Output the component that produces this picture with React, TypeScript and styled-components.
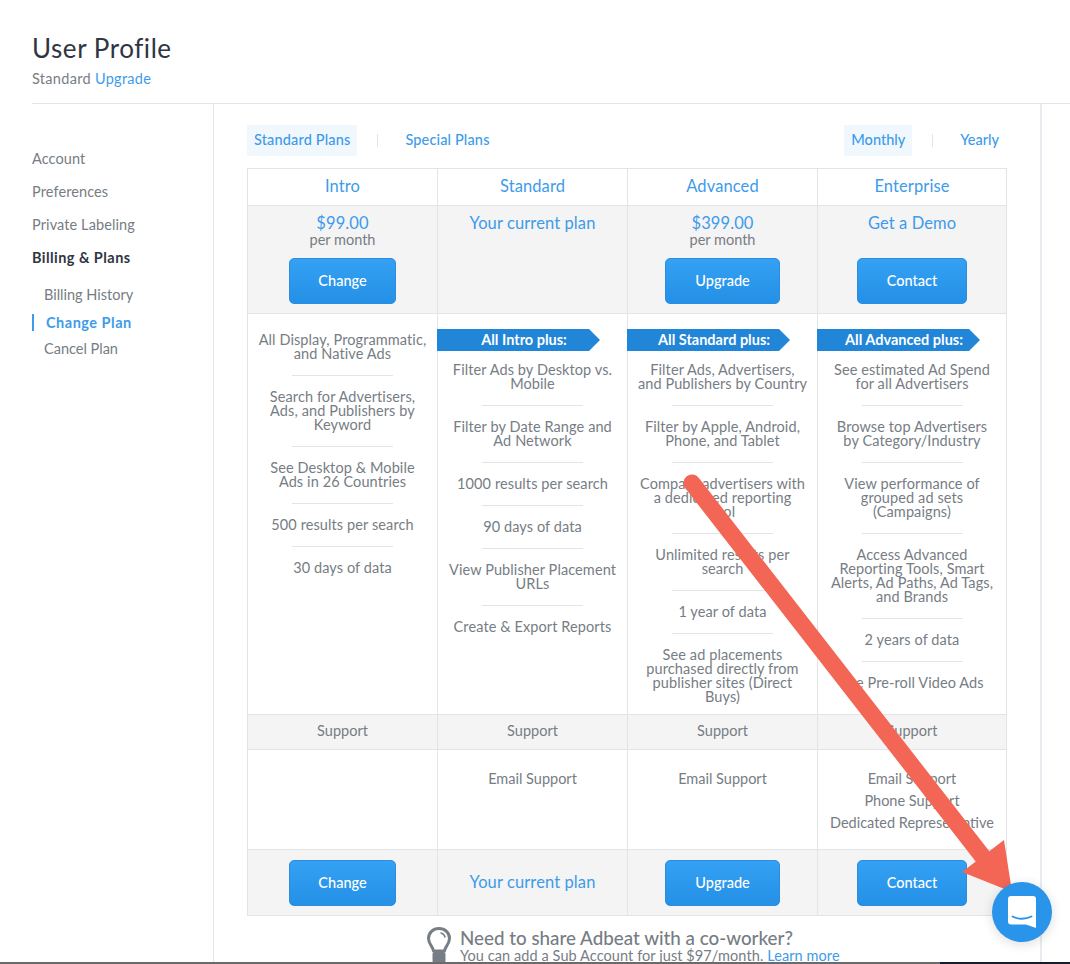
import { ReactElement } from 'react'
import styled, { createGlobalStyle } from 'styled-components'

const BLUE = '#3d9bea'
const TEXT = '#767d84'
const DARK = '#2f3542'
const LINE = '#e3e4e6'
const SHADE = '#f4f4f4'
const FONT = 'Lato, "Open Sans", sans-serif'

const GlobalStyle = createGlobalStyle`
  html, body {
    margin: 0;
    padding: 0;
    background: #fff;
    font-family: ${FONT};
    -webkit-font-smoothing: antialiased;
  }
`

const Page = styled.div`
  position: relative;
  width: 1070px;
  height: 964px;
  overflow: hidden;
  background: #fff;
`

const Header = styled.header`
  height: 104px;
  box-sizing: border-box;
  margin-left: 32px;
  padding-top: 32px;
  border-bottom: 1px solid ${LINE};
`

const Title = styled.h1`
  margin: 0;
  font-size: 26px;
  line-height: 33px;
  font-weight: 400;
  color: ${DARK};
  letter-spacing: 0.55px;
`

const Subtitle = styled.div`
  margin-top: 5px;
  font-size: 14.5px;
  line-height: 18px;
  letter-spacing: 0.3px;
  color: ${TEXT};

  a {
    color: ${BLUE};
    text-decoration: none;
  }
`

const Body = styled.div`
  display: flex;
  height: 860px;
  margin-left: 32px;
`

const Sidebar = styled.nav`
  width: 182px;
  flex: none;
  box-sizing: border-box;
  padding-top: 45px;
  border-right: 1px solid ${LINE};
`

const NavItem = styled.div<{ $bold?: boolean }>`
  height: 33px;
  line-height: 20px;
  font-size: 14.5px;
  font-weight: ${({ $bold }) => ($bold ? 700 : 400)};
  letter-spacing: ${({ $bold }) => ($bold ? '0.45px' : '0.1px')};
  color: ${({ $bold }) => ($bold ? DARK : TEXT)};
`

const SubNav = styled.div`
  margin-top: 4px;
`

const SubNavItem = styled.div<{ $active?: boolean }>`
  height: 27px;
  line-height: 20px;
  font-size: 14.5px;
  padding-left: 12px;
  color: ${({ $active }) => ($active ? BLUE : TEXT)};
  font-weight: ${({ $active }) => ($active ? 700 : 400)};

  ${({ $active }) =>
    $active &&
    `
    box-shadow: inset 2px 0 0 ${BLUE};
    height: 17px;
    line-height: 17px;
    padding-left: 14px;
    margin: 2px 0 8px;
    letter-spacing: 0.5px;
  `}
`

const Main = styled.main`
  width: 828px;
  flex: none;
  box-sizing: border-box;
  padding: 21px 34px 0 33px;
  border-right: 2px solid #e8ecf0;
`

const TabBar = styled.div`
  display: flex;
  justify-content: space-between;
  height: 31px;
  margin-bottom: 12px;
`

const TabGroup = styled.div`
  display: flex;
  align-items: center;
`

const Tab = styled.a<{ $active?: boolean; $wide?: boolean }>`
  height: 31px;
  line-height: 30px;
  padding: 0 7px;
  font-size: 14.5px;
  font-weight: 500;
  letter-spacing: ${({ $wide }) => ($wide ? '0.15px' : '0')};
  color: ${BLUE};
  background: ${({ $active }) => ($active ? '#f0f7fd' : 'transparent')};
`

const TabDivider = styled.span`
  width: 1px;
  height: 13px;
  margin: 0 20px;
  background: ${LINE};
`

const Table = styled.div`
  display: grid;
  grid-template-columns: 190px 190px 190px 188px;
  grid-template-rows: 37px 108px 401px 35px 100px 66px;
  width: 760px;
  box-sizing: border-box;
  border: 1px solid ${LINE};
  border-bottom: none;
`

const Cell = styled.div<{ $shaded?: boolean; $last?: boolean }>`
  display: flex;
  flex-direction: column;
  align-items: center;
  box-sizing: border-box;
  min-width: 0;
  background: ${({ $shaded }) => ($shaded ? SHADE : '#fff')};
  border-bottom: 1px solid ${LINE};
  border-right: ${({ $last }) => ($last ? 'none' : `1px solid ${LINE}`)};
  text-align: center;
  color: ${TEXT};
`

const PlanName = styled.div`
  font-size: 16.5px;
  line-height: 34px;
  letter-spacing: 0.1px;
  color: ${BLUE};
`

const Price = styled.div`
  margin-top: 8px;
  height: 18px;
  line-height: 18px;
  font-size: 16.5px;
  letter-spacing: 0.1px;
  color: ${BLUE};
`

const PerMonth = styled.div`
  height: 16px;
  line-height: 16px;
  font-size: 14.5px;
  color: ${TEXT};
  margin-bottom: 10px;
`

const PlanButton = styled.button<{ $width: number }>`
  width: ${({ $width }) => $width}px;
  height: 46px;
  padding: 0 0 2px;
  border: 1px solid #2a8de0;
  border-radius: 5px;
  background: linear-gradient(#35a1f4, #2490e6);
  color: #fff;
  font-family: ${FONT};
  font-size: 14.5px;
  font-weight: 500;
`

const Ribbon = styled.div`
  align-self: flex-start;
  width: 163px;
  height: 22px;
  margin: 15px 0 0 -1px;
  padding-left: 11px;
  box-sizing: border-box;
  line-height: 22px;
  font-size: 14.5px;
  font-weight: 700;
  color: #fff;
  background: #2185d8;
  clip-path: polygon(0 0, 152px 0, 163px 50%, 152px 100%, 0 100%);
`

const FeatureList = styled.div<{ $plain?: boolean }>`
  display: flex;
  flex-direction: column;
  align-items: center;
  width: 100%;
  margin-top: ${({ $plain }) => ($plain ? '5px' : '-2px')};
`

const Feature = styled.div`
  display: flex;
  flex-direction: column;
  align-items: center;
  width: 100%;
  padding: 14px 0;
  font-size: 14.5px;
  line-height: 14px;
  letter-spacing: 0.1px;

  & + &::before {
    content: '';
    display: block;
    width: 101px;
    height: 1px;
    margin: -14px 0 14px;
    background: ${LINE};
  }

  span {
    display: block;
    white-space: nowrap;
  }
`

const SupportLabel = styled.div`
  font-size: 14.5px;
  line-height: 31px;
`

const SupportList = styled.div`
  padding-top: 18px;
  font-size: 14.5px;
  line-height: 22px;
`

const CurrentPlan = styled.div`
  font-size: 16.5px;
  line-height: 64px;
  letter-spacing: 0.1px;
  color: ${BLUE};
`

const BottomAction = styled.div`
  padding-top: 10px;
`

const Promo = styled.div`
  display: flex;
  gap: 9px;
  margin: 11px 0 0 180px;
`

const PromoText = styled.div`
  white-space: nowrap;
`

const PromoTitle = styled.div`
  font-size: 18.8px;
  line-height: 21px;
  font-weight: 500;
  color: ${TEXT};
`

const PromoLine = styled.div`
  font-size: 14.5px;
  line-height: 15px;
  letter-spacing: 0.08px;
  color: ${TEXT};

  a {
    color: ${BLUE};
  }
`

const Strip = styled.div`
  position: absolute;
  left: 0;
  right: 0;
  bottom: 0;
  height: 2px;
  background: linear-gradient(to right, #6a6a6a 0, #6a6a6a 940px, #141c2c 940px);
`

const Annotation = styled.svg`
  position: absolute;
  left: 0;
  top: 0;
  pointer-events: none;
`

const ChatBubble = styled.div`
  position: absolute;
  left: 992px;
  top: 882px;
  width: 60px;
  height: 60px;
  border-radius: 50%;
  background: #2a94ea;
  box-shadow: 0 2px 12px rgba(0, 0, 0, 0.14);
`

type Plan = {
  name: string
  price?: string
  headline?: string
  button?: { label: string; width: number }
  bottom?: string
  ribbon?: string
  features: string[][]
  support: string[]
}

const PLANS: Plan[] = [
  {
    name: 'Intro',
    price: '$99.00',
    button: { label: 'Change', width: 107 },
    features: [
      ['All Display, Programmatic,', 'and Native Ads'],
      ['Search for Advertisers,', 'Ads, and Publishers by', 'Keyword'],
      ['See Desktop & Mobile', 'Ads in 26 Countries'],
      ['500 results per search'],
      ['30 days of data'],
    ],
    support: [],
  },
  {
    name: 'Standard',
    headline: 'Your current plan',
    bottom: 'Your current plan',
    ribbon: 'All Intro plus:',
    features: [
      ['Filter Ads by Desktop vs.', 'Mobile'],
      ['Filter by Date Range and', 'Ad Network'],
      ['1000 results per search'],
      ['90 days of data'],
      ['View Publisher Placement', 'URLs'],
      ['Create & Export Reports'],
    ],
    support: ['Email Support'],
  },
  {
    name: 'Advanced',
    price: '$399.00',
    button: { label: 'Upgrade', width: 115 },
    ribbon: 'All Standard plus:',
    features: [
      ['Filter Ads, Advertisers,', 'and Publishers by Country'],
      ['Filter by Apple, Android,', 'Phone, and Tablet'],
      ['Compare advertisers with', 'a dedicated reporting', 'tool'],
      ['Unlimited results per', 'search'],
      ['1 year of data'],
      ['See ad placements', 'purchased directly from', 'publisher sites (Direct', 'Buys)'],
    ],
    support: ['Email Support'],
  },
  {
    name: 'Enterprise',
    headline: 'Get a Demo',
    button: { label: 'Contact', width: 110 },
    ribbon: 'All Advanced plus:',
    features: [
      ['See estimated Ad Spend', 'for all Advertisers'],
      ['Browse top Advertisers', 'by Category/Industry'],
      ['View performance of', 'grouped ad sets', '(Campaigns)'],
      ['Access Advanced', 'Reporting Tools, Smart', 'Alerts, Ad Paths, Ad Tags,', 'and Brands'],
      ['2 years of data'],
      ['See Pre-roll Video Ads'],
    ],
    support: ['Email Support', 'Phone Support', 'Dedicated Representative'],
  },
]

const Bulb = (): ReactElement => (
  <svg width="24" height="36" viewBox="0 0 24 36" fill="none">
    <path
      d="M6.5 24c0-4-5-6.500-5-12.500C1.500 5.700 6 1.500 12 1.500s10.500 4.200 10.500 10c0 6-5 8.500-5 12.500z"
      stroke="#767d84"
      strokeWidth="3"
      strokeLinejoin="round"
    />
    <path d="M14 6c2 .5 3.500 2 4 4" stroke="#767d84" strokeWidth="1.500" strokeLinecap="round" />
    <rect x="5.500" y="25" width="13" height="11" rx="2" fill="#767d84" />
  </svg>
)

const ChatIcon = (): ReactElement => (
  <svg width="60" height="60" viewBox="0 0 60 60">
    <path
      d="M19 14h22a3 3 0 0 1 3 3v29l-10-3.500H19a3 3 0 0 1-3-3V17a3 3 0 0 1 3-3z"
      fill="#fff"
    />
    <path
      d="M20.500 34.500q9.500 4.500 19 0"
      fill="none"
      stroke="#2a94ea"
      strokeWidth="1.800"
      strokeLinecap="round"
    />
  </svg>
)

const App = (): ReactElement => (
  <Page>
    <GlobalStyle />
    <Header>
      <Title>User Profile</Title>
      <Subtitle>
        Standard <a href="#upgrade">Upgrade</a>
      </Subtitle>
    </Header>
    <Body>
      <Sidebar>
        <NavItem>Account</NavItem>
        <NavItem>Preferences</NavItem>
        <NavItem>Private Labeling</NavItem>
        <NavItem $bold>Billing &amp; Plans</NavItem>
        <SubNav>
          <SubNavItem>Billing History</SubNavItem>
          <SubNavItem $active>Change Plan</SubNavItem>
          <SubNavItem>Cancel Plan</SubNavItem>
        </SubNav>
      </Sidebar>
      <Main>
        <TabBar>
          <TabGroup>
            <Tab $active $wide>Standard Plans</Tab>
            <TabDivider />
            <Tab $wide>Special Plans</Tab>
          </TabGroup>
          <TabGroup>
            <Tab $active>Monthly</Tab>
            <TabDivider />
            <Tab>Yearly</Tab>
          </TabGroup>
        </TabBar>
        <Table>
          {PLANS.map((plan, i) => (
            <Cell key={plan.name} $last={i === 3}>
              <PlanName>{plan.name}</PlanName>
            </Cell>
          ))}
          {PLANS.map((plan, i) => (
            <Cell key={plan.name} $shaded $last={i === 3}>
              <Price>{plan.price ?? plan.headline}</Price>
              <PerMonth>{plan.price ? 'per month' : '\u00a0'}</PerMonth>
              {plan.button && (
                <PlanButton $width={plan.button.width}>{plan.button.label}</PlanButton>
              )}
            </Cell>
          ))}
          {PLANS.map((plan, i) => (
            <Cell key={plan.name} $last={i === 3}>
              {plan.ribbon && <Ribbon>{plan.ribbon}</Ribbon>}
              <FeatureList $plain={!plan.ribbon}>
                {plan.features.map((lines) => (
                  <Feature key={lines[0]}>
                    {lines.map((line) => (
                      <span key={line}>{line}</span>
                    ))}
                  </Feature>
                ))}
              </FeatureList>
            </Cell>
          ))}
          {PLANS.map((plan, i) => (
            <Cell key={plan.name} $shaded $last={i === 3}>
              <SupportLabel>Support</SupportLabel>
            </Cell>
          ))}
          {PLANS.map((plan, i) => (
            <Cell key={plan.name} $last={i === 3}>
              <SupportList>
                {plan.support.map((line) => (
                  <div key={line}>{line}</div>
                ))}
              </SupportList>
            </Cell>
          ))}
          {PLANS.map((plan, i) => (
            <Cell key={plan.name} $shaded $last={i === 3}>
              {plan.button ? (
                <BottomAction>
                  <PlanButton $width={plan.button.width}>{plan.button.label}</PlanButton>
                </BottomAction>
              ) : (
                <CurrentPlan>{plan.bottom}</CurrentPlan>
              )}
            </Cell>
          ))}
        </Table>
        <Promo>
          <Bulb />
          <PromoText>
            <PromoTitle>Need to share Adbeat with a co-worker?</PromoTitle>
            <PromoLine>
              You can add a Sub Account for just $97/month. <a href="#more">Learn more</a>
            </PromoLine>
          </PromoText>
        </Promo>
      </Main>
    </Body>
    <Strip />
    <Annotation width="1070" height="964" viewBox="0 0 1070 964">
      <line
        x1="692"
        y1="483"
        x2="983"
        y2="857"
        stroke="#f36655"
        strokeWidth="17"
        strokeLinecap="round"
      />
      <polygon points="962,872 1004,840 1012,892" fill="#f36655" />
    </Annotation>
    <ChatBubble>
      <ChatIcon />
    </ChatBubble>
  </Page>
)

export default App
